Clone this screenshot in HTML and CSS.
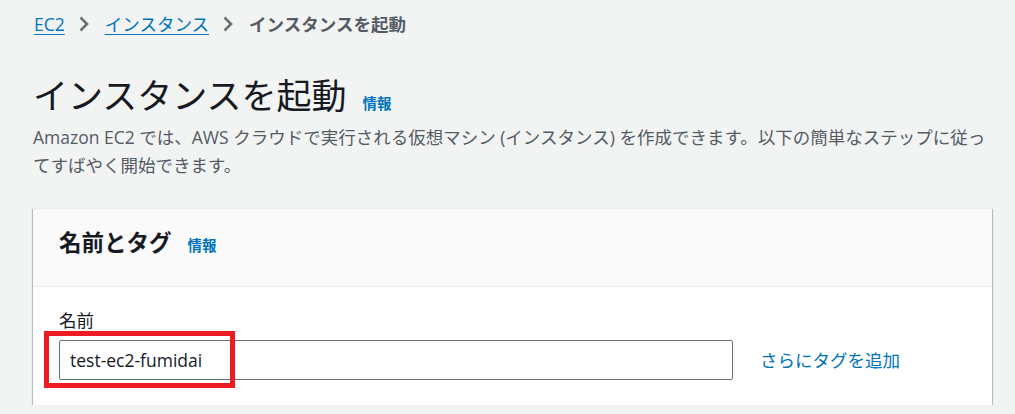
FILE: index.html
```html
<!DOCTYPE html>
<html lang="ja">
<head>
<meta charset="utf-8">
<title>インスタンスを起動</title>
<link rel="stylesheet" href="styles.css">
</head>
<body>
<div class="page">
  <nav class="breadcrumb">
    <a class="crumb-link" href="#">EC2</a>
    <svg class="chev" width="14" height="18" viewBox="0 0 14 18"><path d="M3.5 2.5l6.5 6.5-6.5 6.5" fill="none" stroke="#687078" stroke-width="2.6"/></svg>
    <a class="crumb-link" href="#">インスタンス</a>
    <svg class="chev" width="14" height="18" viewBox="0 0 14 18"><path d="M3.5 2.5l6.5 6.5-6.5 6.5" fill="none" stroke="#687078" stroke-width="2.6"/></svg>
    <span class="crumb-current">インスタンスを起動</span>
  </nav>

  <div class="title-row">
    <h1 class="title">インスタンスを起動</h1>
    <a class="info" href="#">情報</a>
  </div>
  <p class="desc">Amazon EC2 では、AWS クラウドで実行される仮想マシン (インスタンス) を作成できます。以下の簡単なステップに従っ<br>てすばやく開始できます。</p>

  <section class="card">
    <div class="card-header">
      <h2 class="card-title">名前とタグ</h2>
      <a class="info info-h2" href="#">情報</a>
    </div>
    <div class="card-body">
      <label class="field-label" for="name">名前</label>
      <div class="field-row">
        <div class="input-wrap">
          <input id="name" class="text-input" type="text" value="test-ec2-fumidai">
          <span class="highlight"></span>
        </div>
        <a class="add-tags" href="#">さらにタグを追加</a>
      </div>
    </div>
  </section>
</div>
</body>
</html>
```

FILE: styles.css
```css
* { box-sizing: border-box; }

body {
  margin: 0;
  background: #f2f3f3;
  font-family: "Open Sans", "Noto Sans CJK JP", sans-serif;
  color: #16191f;
}

.page {
  padding: 0 23px 0 33px;
}

.breadcrumb {
  display: flex;
  align-items: center;
  padding-top: 12px;
  height: 36px;
  font-size: 17.5px;
  line-height: 24px;
  padding-left: 1px;
}

.crumb-link {
  color: #0073bb;
  text-decoration: underline;
  text-underline-offset: 3px;
}

.chev {
  margin: 0 14px 0 12px;
}

.crumb-current {
  color: #545b64;
  font-weight: 700;
}

.title-row {
  display: flex;
  align-items: baseline;
  margin-top: 38px;
  height: 44px;
}

.title {
  margin: 0;
  font-size: 35px;
  line-height: 44px;
  font-weight: 400;
  color: #16191f;
}

.info {
  color: #0073bb;
  font-size: 14.5px;
  line-height: 20px;
  font-weight: 700;
  text-decoration: none;
  margin-left: 16px;
}

.desc {
  margin: 5px 0 0 0;
  font-size: 17.5px;
  line-height: 28px;
  color: #545b64;
  white-space: nowrap;
}

.card {
  margin-top: 29px;
  background: #fff;
  border-top: 1px solid #eaeded;
  box-shadow: 0 1px 1px 0 rgba(0, 28, 36, 0.35), 1px 1px 1px 0 rgba(0, 28, 36, 0.2), -1px 1px 1px 0 rgba(0, 28, 36, 0.2);
}

.card-header {
  display: flex;
  align-items: baseline;
  background: #fafafa;
  border-bottom: 1px solid #eaeded;
  padding: 19px 26px 28px 26px;
}

.card-title {
  margin: 0;
  font-size: 22.5px;
  line-height: 30px;
  font-weight: 700;
}

.info-h2 {
  margin-left: 16px;
}

.card-body {
  padding: 21px 26px 25px 26px;
}

.field-label {
  display: block;
  font-size: 17.5px;
  line-height: 24px;
  color: #16191f;
}

.field-row {
  display: flex;
  align-items: center;
  gap: 27px;
  margin-top: 8px;
}

.input-wrap {
  position: relative;
  width: 674px;
}

.text-input {
  display: block;
  width: 100%;
  height: 40px;
  border: 1px solid #687078;
  border-radius: 2px;
  padding: 0 10px;
  font-family: "Open Sans", "Noto Sans CJK JP", sans-serif;
  font-size: 17.5px;
  color: #16191f;
  background: #fff;
}

.highlight {
  position: absolute;
  left: -15px;
  top: -9px;
  width: 191px;
  height: 57px;
  border: 5px solid #ed1c24;
  pointer-events: none;
}

.add-tags {
  color: #0073bb;
  text-decoration: none;
  font-size: 17.5px;
  line-height: 24px;
}
```
